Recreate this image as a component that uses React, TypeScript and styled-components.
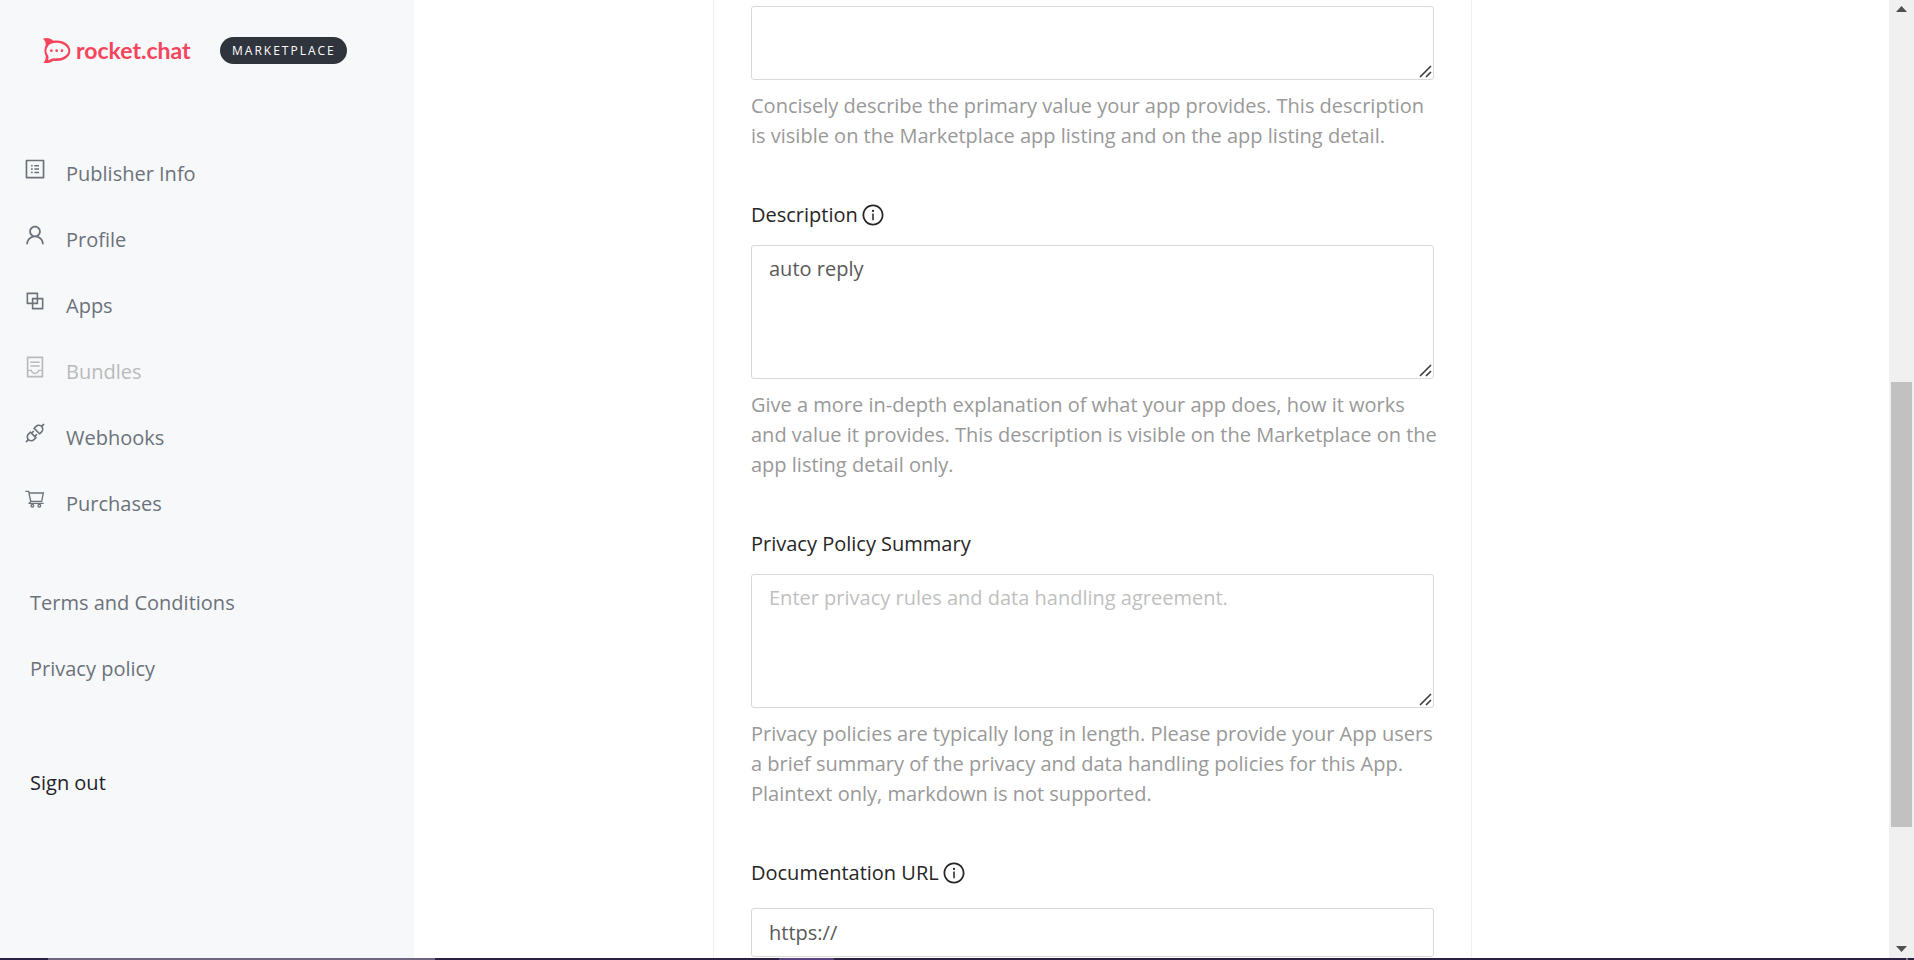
import React from 'react';
import styled, { createGlobalStyle } from 'styled-components';
import {
  AiOutlineApi,
  AiOutlineBlock,
  AiOutlineContainer,
  AiOutlineInfoCircle,
  AiOutlineProfile,
  AiOutlineUser,
} from 'react-icons/ai';

const GlobalStyle = createGlobalStyle`
  * { box-sizing: border-box; }
  body {
    margin: 0;
    background: #fff;
    font: 20px/30px "Open Sans", "Noto Sans", sans-serif;
    color: #262626;
  }
`;

const Screen = styled.div`
  display: flex;
  flex-direction: column;
  height: 100vh;
  overflow: hidden;
`;

const Page = styled.div`
  flex: 1;
  min-height: 0;
  display: flex;
`;

const Sidebar = styled.aside`
  flex: none;
  width: 414px;
  background: #f7f8fa;
`;

const Brand = styled.header`
  display: flex;
  align-items: center;
  height: 100px;
  padding: 0 0 0 42px;
`;

const Logo = styled.a`
  display: flex;
  align-items: center;
  gap: 5px;
  width: 178px;
  color: #f5455c;
  font: 700 23px/30px Lato, sans-serif;
  text-decoration: none;
`;

const Badge = styled.span`
  padding: 0 11px 0 12px;
  border-radius: 14px;
  background: #2f343d;
  color: #fff;
  font-size: 12px;
  line-height: 27px;
  letter-spacing: 2px;
`;

const Menu = styled.nav`
  display: flex;
  flex-direction: column;
  gap: 36px;
  padding: 59px 23px 0;
`;

const MenuLink = styled.a<{ $muted?: boolean }>`
  display: flex;
  align-items: flex-start;
  gap: 19px;
  color: ${(p) => (p.$muted ? '#b9babc' : '#6c727a')};
  text-decoration: none;

  svg {
    flex: none;
    margin-top: -2px;
  }
`;

const Links = styled.nav`
  display: flex;
  flex-direction: column;
  align-items: flex-start;
  gap: 36px;
  padding: 69px 30px 0;
`;

const TextLink = styled.a`
  color: #6c727a;
  text-decoration: none;
`;

const SignOut = styled.button`
  margin: 48px 0 0;
  padding: 0;
  border: 0;
  background: none;
  color: #1f2329;
  font: inherit;
  cursor: pointer;
`;

const Main = styled.main`
  flex: 1;
  min-width: 0;
  display: flex;
  justify-content: center;
  padding-right: 118px;
  overflow: hidden;
`;

const Form = styled.form`
  display: flex;
  flex-direction: column;
  gap: 49px;
  width: 100%;
  max-width: 759px;
  padding: 6px 37px 0;
  border: solid #f0f0f0;
  border-width: 0 1px;
`;

const FieldBox = styled.div`
  display: flex;
  flex-direction: column;
`;

const LabelRow = styled.div<{ $gap: number }>`
  display: flex;
  align-items: center;
  gap: 3px;
  margin-bottom: ${(p) => p.$gap}px;
`;

const InfoButton = styled.button`
  display: flex;
  padding: 0;
  border: 0;
  background: none;
  color: inherit;
`;

const AreaWrap = styled.div`
  position: relative;
`;

const TextArea = styled.textarea<{ $height: number }>`
  display: block;
  width: 100%;
  height: ${(p) => p.$height}px;
  padding: 8px 17px;
  border: 1px solid #d9d9d9;
  border-radius: 3px;
  background: #fff;
  color: #595959;
  font: inherit;
  resize: vertical;
  outline: none;

  &::placeholder { color: #bfbfbf; }
  &::-webkit-resizer { background: transparent; }
`;

const Grip = styled.svg`
  position: absolute;
  right: 2px;
  bottom: 2px;
  pointer-events: none;
`;

const TextInput = styled.input`
  width: 100%;
  height: 49px;
  padding: 0 17px;
  border: 1px solid #d9d9d9;
  border-radius: 3px;
  background: #fff;
  color: #595959;
  font: inherit;
  outline: none;
`;

const Help = styled.p`
  margin: 11px -6px 0 0;
  color: #999;
`;

const ScrollRail = styled.div`
  flex: none;
  display: flex;
  flex-direction: column;
  width: 25px;
  padding: 0 2px;
  background: #f0f0f0;
`;

const ScrollArrow = styled.button`
  display: flex;
  justify-content: center;
  align-items: center;
  height: 18px;
  padding: 0;
  border: 0;
  background: none;
`;

const RailSpace = styled.div<{ $share: number }>`
  flex: ${(p) => p.$share} 0 0;
`;

const Thumb = styled(RailSpace)`
  background: #c1c1c1;
`;

const Taskbar = styled.div`
  flex: none;
  display: flex;
  height: 2px;
  background: #2a2240;
`;

const TaskPart = styled.div<{ $share: number; $color: string }>`
  flex: ${(p) => p.$share} 0 0;
  background: ${(p) => p.$color};
`;

function RocketIcon() {
  return (
    <svg width="29" height="27" viewBox="125 112 87 81" fill="currentColor" aria-hidden="true">
      <path
        fillRule="evenodd"
        d="M128 117C139 113 151 115 159 123C188 119 210 133 210 153C210 173 188 187 159 183C151 189 140 192 129 189C135 184 137 176 136 169C131 159 131 147 136 137C137 129 134 123 128 117ZM144 138C152 129 170 127 185 132C197 137 204 145 204 153C204 167 185 178 160 176C156 176 149 180 143 182C146 175 144 169 142 165C136 156 137 147 144 138Z"
      />
      <circle cx="153" cy="153" r="4" />
      <circle cx="169" cy="153" r="4" />
      <circle cx="185" cy="153" r="4" />
    </svg>
  );
}

function CartIcon({ size }: { size: number }) {
  return (
    <svg width={size} height={size} viewBox="0 0 72 72" fill="none" stroke="currentColor" strokeWidth="4" aria-hidden="true">
      <path d="M7 13H17L23 43H56L61 18H19M23 43L19 49H62" />
      <circle cx="28" cy="56" r="4" />
      <circle cx="49" cy="56" r="4" />
    </svg>
  );
}

const menu = [
  { label: 'Publisher Info', Icon: AiOutlineProfile },
  { label: 'Profile', Icon: AiOutlineUser },
  { label: 'Apps', Icon: AiOutlineBlock },
  { label: 'Bundles', Icon: AiOutlineContainer, muted: true },
  { label: 'Webhooks', Icon: AiOutlineApi },
  { label: 'Purchases', Icon: CartIcon },
];

function FieldLabel({ id, text, info, gap = 15 }: { id: string; text: string; info?: boolean; gap?: number }) {
  return (
    <LabelRow $gap={gap}>
      <label htmlFor={id}>{text}</label>
      {info && (
        <InfoButton type="button" aria-label={`About ${text}`}>
          <AiOutlineInfoCircle size={24} />
        </InfoButton>
      )}
    </LabelRow>
  );
}

type AreaProps = React.ComponentProps<'textarea'> & { $height: number };

function Area(props: AreaProps) {
  return (
    <AreaWrap>
      <TextArea {...props} />
      <Grip width="13" height="13" viewBox="0 0 13 13" stroke="#3c3c3c" strokeWidth="1.6" aria-hidden="true">
        <path d="M1 12L12 1M7 12L12 7" />
      </Grip>
    </AreaWrap>
  );
}

export default function App() {
  return (
    <Screen>
      <GlobalStyle />
      <Page>
        <Sidebar>
          <Brand>
            <Logo href="#home">
              <RocketIcon />
              rocket.chat
            </Logo>
            <Badge>MARKETPLACE</Badge>
          </Brand>
          <Menu>
            {menu.map(({ label, Icon, muted }) => (
              <MenuLink key={label} href={`#${label}`} $muted={muted}>
                <Icon size={24} />
                {label}
              </MenuLink>
            ))}
          </Menu>
          <Links>
            <TextLink href="#terms">Terms and Conditions</TextLink>
            <TextLink href="#privacy">Privacy policy</TextLink>
            <SignOut type="button">Sign out</SignOut>
          </Links>
        </Sidebar>
        <Main>
          <Form>
            <FieldBox>
              <Area aria-label="Short description" $height={74} />
              <Help>
                Concisely describe the primary value your app provides. This description is visible on the
                Marketplace app listing and on the app listing detail.
              </Help>
            </FieldBox>
            <FieldBox>
              <FieldLabel id="description" text="Description" info />
              <Area id="description" $height={134} defaultValue="auto reply" />
              <Help>
                Give a more in-depth explanation of what your app does, how it works and value it provides. This
                description is visible on the Marketplace on the app listing detail only.
              </Help>
            </FieldBox>
            <FieldBox>
              <FieldLabel id="privacy" text="Privacy Policy Summary" />
              <Area
                id="privacy"
                $height={134}
                placeholder="Enter privacy rules and data handling agreement."
              />
              <Help>
                Privacy policies are typically long in length. Please provide your App users a brief summary of the
                privacy and data handling policies for this App. Plaintext only, markdown is not supported.
              </Help>
            </FieldBox>
            <FieldBox>
              <FieldLabel id="docs" text="Documentation URL" info gap={20} />
              <TextInput id="docs" type="text" defaultValue="https://" />
            </FieldBox>
          </Form>
        </Main>
        <ScrollRail>
          <ScrollArrow type="button" aria-label="Scroll up">
            <svg width="11" height="6"><path d="M5.5 0 11 6H0z" fill="#505050" /></svg>
          </ScrollArrow>
          <RailSpace $share={364} />
          <Thumb $share={445} />
          <RailSpace $share={113} />
          <ScrollArrow type="button" aria-label="Scroll down">
            <svg width="11" height="6"><path d="M0 0h11L5.5 6z" fill="#505050" /></svg>
          </ScrollArrow>
        </ScrollRail>
      </Page>
      <Taskbar>
        <TaskPart $share={48} $color="#2a2240" />
        <TaskPart $share={387} $color="#71667f" />
        <TaskPart $share={344} $color="#2a2240" />
        <TaskPart $share={55} $color="#5b4382" />
        <TaskPart $share={1072} $color="#2a2240" />
        <TaskPart $share={2} $color="#80798c" />
        <TaskPart $share={6} $color="#2a2240" />
      </Taskbar>
    </Screen>
  );
}
